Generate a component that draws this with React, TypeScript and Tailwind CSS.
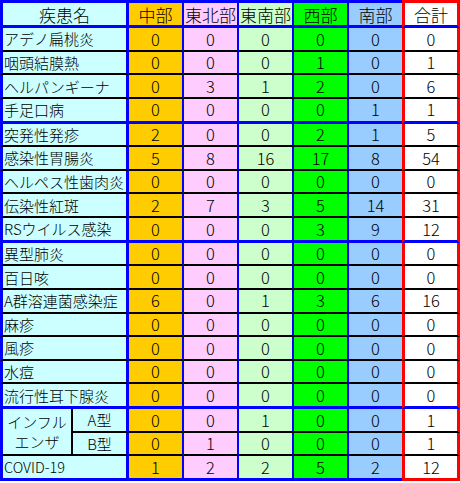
import React from "react";

type Bottom = "thin" | "thick";

const colBg = [
  "bg-[#ffcc00]",
  "bg-[#ffccff]",
  "bg-[#ccffcc]",
  "bg-[#00ff00]",
  "bg-[#99ccff]",
];

const colW = [
  "w-[55px] border-r-2 border-r-[#0000ff]",
  "w-[55px] border-r-2 border-r-[#0000ff]",
  "w-[55px] border-r-2 border-r-[#0000ff]",
  "w-[55px] border-r-2 border-r-[#0000ff]",
  "w-[53px]",
];

const bottomCls: Record<Bottom, string> = {
  thin: "border-b-2 border-b-black",
  thick: "border-b-[3px] border-b-[#0000ff]",
};

const totalBottom = (b: Bottom, last: boolean) =>
  last ? "border-b-[3px] border-b-[#ff0000]" : bottomCls[b];

const rowH: Record<Bottom, string> = {
  thin: "h-[23.63px]",
  thick: "h-[24.63px]",
};

function DataCells({ vals, bottom, last }: { vals: number[]; bottom: Bottom; last: boolean }) {
  const total = vals.reduce((a, b) => a + b, 0);
  return (
    <>
      {vals.map((v, i) => (
        <div
          key={i}
          className={`${colW[i]} ${colBg[i]} ${bottomCls[bottom]} flex shrink-0 items-center justify-center text-[16.5px] leading-none`}
        >
          {v}
        </div>
      ))}
      <div
        className={`w-[58px] shrink-0 bg-white border-l-[3px] border-r-[3px] border-l-[#ff0000] border-r-[#ff0000] ${totalBottom(
          bottom,
          last
        )} flex items-center justify-center text-[16.5px] leading-none`}
      >
        {total}
      </div>
    </>
  );
}

function Row({
  name,
  vals,
  bottom = "thin",
  last = false,
  small = false,
}: {
  name: string;
  vals: number[];
  bottom?: Bottom;
  last?: boolean;
  small?: boolean;
}) {
  return (
    <div className={`flex ${rowH[bottom]}`}>
      <div
        className={`w-[129px] shrink-0 bg-[#ccffff] border-l-[3px] border-r-[3px] border-l-[#0000ff] border-r-[#0000ff] ${bottomCls[bottom]} flex items-center pl-[1px] ${
          small ? "text-[14.5px]" : "text-[15px]"
        } leading-none whitespace-nowrap`}
      >
        {name}
      </div>
      <DataCells vals={vals} bottom={bottom} last={last} />
    </div>
  );
}

const headers = ["中部", "東北部", "東南部", "西部", "南部"];

export default function App() {
  return (
    <div className="w-[460px] bg-white text-black font-light font-['Noto_Sans_CJK_JP',sans-serif]">
      {/* header */}
      <div className="flex h-[28px]">
        <div className="w-[129px] shrink-0 bg-[#ccffff] border-l-[3px] border-r-[3px] border-t-[3px] border-b-[3px] border-[#0000ff] flex items-center justify-center text-[17px] leading-none">
          疾患名
        </div>
        {headers.map((h, i) => (
          <div
            key={h}
            className={`${colW[i]} ${colBg[i]} border-t-[3px] border-t-[#0000ff] border-b-[3px] border-b-[#0000ff] flex shrink-0 items-center justify-center text-[17px] leading-none whitespace-nowrap`}
          >
            {h}
          </div>
        ))}
        <div className="w-[58px] shrink-0 bg-white border-l-[3px] border-r-[3px] border-t-[3px] border-l-[#ff0000] border-r-[#ff0000] border-t-[#ff0000] border-b-[3px] border-b-[#0000ff] flex items-center justify-center text-[17px] leading-none">
          合計
        </div>
      </div>

      <Row name="アデノ扁桃炎" vals={[0, 0, 0, 0, 0]} />
      <Row name="咽頭結膜熱" vals={[0, 0, 0, 1, 0]} />
      <Row name="ヘルパンギーナ" vals={[0, 3, 1, 2, 0]} />
      <Row name="手足口病" vals={[0, 0, 0, 0, 1]} bottom="thick" />

      <Row name="突発性発疹" vals={[2, 0, 0, 2, 1]} />
      <Row name="感染性胃腸炎" vals={[5, 8, 16, 17, 8]} />
      <Row name="ヘルペス性歯肉炎" vals={[0, 0, 0, 0, 0]} />
      <Row name="伝染性紅斑" vals={[2, 7, 3, 5, 14]} />
      <Row name="RSウイルス感染" vals={[0, 0, 0, 3, 9]} bottom="thick" />

      <Row name="異型肺炎" vals={[0, 0, 0, 0, 0]} />
      <Row name="百日咳" vals={[0, 0, 0, 0, 0]} />
      <Row name="A群溶連菌感染症" vals={[6, 0, 1, 3, 6]} />
      <Row name="麻疹" vals={[0, 0, 0, 0, 0]} />
      <Row name="風疹" vals={[0, 0, 0, 0, 0]} />
      <Row name="水痘" vals={[0, 0, 0, 0, 0]} />
      <Row name="流行性耳下腺炎" vals={[0, 0, 0, 0, 0]} bottom="thick" />

      {/* influenza */}
      <div className="flex h-[47.26px]">
        <div className="w-[73px] shrink-0 bg-[#ccffff] border-l-[3px] border-l-[#0000ff] border-r-2 border-r-black border-b-2 border-b-black flex flex-col items-center justify-center text-[15px] leading-[20px]">
          <span>インフル</span>
          <span>エンザ</span>
        </div>
        <div className="flex flex-col">
          {[
            { label: "A型", vals: [0, 0, 1, 0, 0] },
            { label: "B型", vals: [0, 1, 0, 0, 0] },
          ].map((r) => (
            <div key={r.label} className="flex h-[23.63px]">
              <div className="w-[56px] shrink-0 bg-[#ccffff] border-r-[3px] border-r-[#0000ff] border-b-2 border-b-black flex items-center justify-center text-[15px] leading-none">
                {r.label}
              </div>
              <DataCells vals={r.vals} bottom="thin" last={false} />
            </div>
          ))}
        </div>
      </div>

      <Row name="COVID-19" vals={[1, 2, 2, 5, 2]} bottom="thick" last small />
    </div>
  );
}
